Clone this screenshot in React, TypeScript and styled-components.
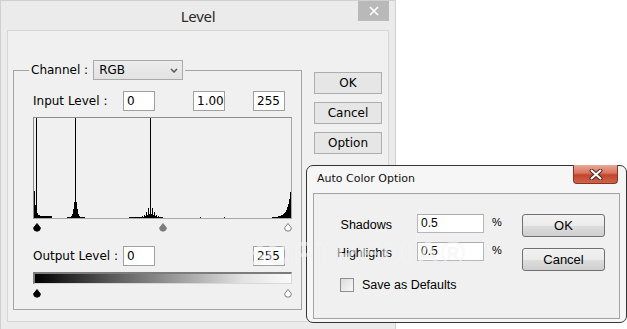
import React from 'react';
import styled, { createGlobalStyle } from 'styled-components';

const GlobalStyle = createGlobalStyle`
  html, body {
    margin: 0;
    padding: 0;
    background: #ffffff;
    overflow: hidden;
  }
  #root {
    position: relative;
    width: 627px;
    height: 329px;
    overflow: hidden;
  }
`;

// ---- histogram data (computed once) ----
const HIST_W = 257;
const HIST_H = 100;
const SPIKES = [2, 41, 116];

const histogram = Array.from({ length: HIST_W }, (_, x) => {
    let h = 0;
    h += 27 * Math.exp(-x / 1.3);
    h += 18 * Math.exp(-(((x - 41) / 2.3) ** 2));
    if (x > 100 && x < 128) h += (x % 2 === 0 ? 10 : 3) * Math.exp(-(((x - 116) / 5) ** 2));
    h += 25 * Math.exp(-(HIST_W - 1 - x) / 3.2);
    if (x >= 3 && x <= 17) h += 2;
    if ((x >= 33 && x <= 50) || (x >= 95 && x <= 128) || x >= 238) h += 1;
    if (x === 166 || x === 190) h += 1;
    return Math.round(h);
});

const histPath = histogram
    .map((h, x) => (h > 0 ? `M${x + 0.5} ${HIST_H}V${HIST_H - Math.min(h, HIST_H)}` : ''))
    .join('');

// ---- Level window ----
const LevelWindow = styled.div`
    width: 396px;
    height: 345px;
    box-sizing: border-box;
    border: 1px solid #d0d0d0;
    background: #ebebeb;
    padding: 0 6px;
    display: flex;
    flex-direction: column;
    font-family: "DejaVu Sans", "Liberation Sans", sans-serif;
    font-size: 12px;
    color: #000;
`;

const TitleBar = styled.div`
    height: 29px;
    display: grid;
    grid-template-columns: 1fr auto 1fr;
    align-items: start;
`;

const Title = styled.div`
    grid-column: 2;
    font-family: "Noto Sans", "Open Sans", sans-serif;
    font-size: 15px;
    letter-spacing: -0.3px;
    line-height: 30px;
    color: #2b2b2b;
`;

const GrayClose = styled.div`
    grid-column: 3;
    justify-self: end;
    width: 31px;
    height: 20px;
    background: #b9b9b9;
    display: flex;
    align-items: center;
    justify-content: center;
`;

const Panel = styled.div`
    border: 1px solid #d7d7d7;
    background: #f0f0f0;
    display: flex;
    align-items: flex-start;
    padding: 29px 5px 11px 5px;
`;

const Group = styled.fieldset`
    width: 289px;
    box-sizing: border-box;
    margin: 0;
    padding: 0;
    min-width: 0;
    border: 1px solid #a3a3a3;
`;

const Legend = styled.legend`
    margin-left: 15px;
    padding: 0 2px;
    display: flex;
    align-items: center;
    gap: 5px;
`;

const SelectBox = styled.div`
    width: 90px;
    height: 20px;
    box-sizing: border-box;
    border: 1px solid #a9a9a9;
    background: linear-gradient(#ececec, #e2e2e2);
    display: flex;
    align-items: center;
    justify-content: space-between;
    padding: 0 4px 0 5px;
`;

const GroupBody = styled.div`
    display: flex;
    flex-direction: column;
    padding: 11px 9px 11px 19px;
`;

const Row = styled.div<{ $top?: number }>`
    display: flex;
    align-items: center;
    height: 20px;
    padding-right: 7px;
    margin-top: ${p => p.$top ?? 0}px;
`;

const RowLabel = styled.span`
    width: 90px;
    flex: none;
`;

const NumField = styled.div<{ $gap?: number; $push?: boolean }>`
    width: 32px;
    height: 20px;
    box-sizing: border-box;
    border: 1px solid #a0a0a0;
    background: #fff;
    padding: 1px 3px 0;
    line-height: 17px;
    margin-left: ${p => (p.$push ? 'auto' : `${p.$gap ?? 0}px`)};
`;

const HistBox = styled.div`
    margin-top: 6px;
    width: 259px;
    height: 102px;
    box-sizing: border-box;
    border: 1px solid #a8a8a8;
    border-top-color: #8c8c8c;
    border-left-color: #8c8c8c;
    background: #f0f0f0;
    display: flex;
`;

const MarkerRow = styled.div<{ $top: number }>`
    margin-top: ${p => p.$top}px;
    width: 259px;
    height: 9px;
    display: flex;
    justify-content: space-between;
`;

const Gradient = styled.div`
    margin-top: 6px;
    width: 259px;
    height: 12px;
    box-sizing: border-box;
    border-top: 2px solid #7c7c7c;
    border-left: 2px solid #7c7c7c;
    border-right: 1px solid #d8d8d8;
    border-bottom: 1px solid #d8d8d8;
    background: linear-gradient(to right, #000 0%, #5a5a5a 30%, #a8a8a8 60%, #e4e4e4 82%, #fafafa 100%);
`;

const ButtonColumn = styled.div`
    margin-left: 12px;
    padding-top: 12px;
    display: flex;
    flex-direction: column;
    gap: 8px;
`;

const FlatButton = styled.div`
    width: 68px;
    height: 22px;
    box-sizing: border-box;
    border: 1px solid #adadad;
    background: #e6e6e6;
    display: flex;
    align-items: center;
    justify-content: center;
`;

// ---- Auto Color Option dialog ----
const AutoDialog = styled.div`
    position: absolute;
    left: 306px;
    top: 165px;
    width: 321px;
    height: 158px;
    box-sizing: border-box;
    border: 1px solid #353535;
    border-radius: 7px;
    background: #f6f6f6;
    padding: 0 6px 3px 6px;
    display: flex;
    flex-direction: column;
    font-family: "Liberation Sans", Arial, sans-serif;
    font-size: 12.5px;
    color: #000;
`;

const DialogTitleBar = styled.div`
    height: 27px;
    display: flex;
    justify-content: space-between;
    align-items: flex-start;
`;

const DialogTitle = styled.div`
    padding: 6px 0 0 4px;
    font-family: "DejaVu Sans", sans-serif;
    font-size: 11px;
    color: #111;
`;

const RedClose = styled.div`
    margin: -1px 2px 0 0;
    width: 45px;
    height: 19px;
    box-sizing: border-box;
    border: 1px solid #8a3424;
    border-top: none;
    border-radius: 0 0 4px 4px;
    background: linear-gradient(#e9a797 0%, #d9745f 45%, #c2452c 55%, #d0644c 100%);
    display: flex;
    align-items: center;
    justify-content: center;
`;

const DialogPanel = styled.div`
    flex: 1;
    border: 1px solid #a3a3a3;
    background: #f0f0f0;
    display: flex;
    align-items: flex-start;
`;

const FormColumn = styled.div`
    padding-top: 20px;
    display: flex;
    flex-direction: column;
`;

const FieldRow = styled.div<{ $top?: number }>`
    display: flex;
    align-items: center;
    height: 19px;
    margin-top: ${p => p.$top ?? 0}px;
`;

const FieldLabel = styled.span`
    width: 78px;
    text-align: right;
    padding-top: 3px;
`;

const TextField = styled.div`
    margin-left: 25px;
    width: 67px;
    height: 19px;
    box-sizing: border-box;
    border: 1px solid #b4b7bd;
    border-top-color: #abadb3;
    background: #fff;
    padding: 1px 3px;
    font-size: 12px;
    line-height: 15px;
`;

const Percent = styled.span`
    margin-left: 8px;
    font-size: 11px;
    padding-bottom: 3px;
`;

const CheckRow = styled.label`
    margin: 17px 0 0 26px;
    display: flex;
    align-items: center;
    gap: 8px;
`;

const CheckBox = styled.span`
    width: 14px;
    height: 14px;
    box-sizing: border-box;
    border: 1px solid #8e8f8f;
    background: linear-gradient(135deg, #dcdcdc, #f8f8f8);
`;

const DialogButtons = styled.div`
    margin: 20px 14px 0 auto;
    display: flex;
    flex-direction: column;
    gap: 11px;
`;

const RoundButton = styled.div`
    width: 83px;
    height: 23px;
    box-sizing: border-box;
    border: 1px solid #707070;
    border-radius: 3px;
    background: linear-gradient(#f2f2f2 0%, #ebebeb 50%, #dddddd 51%, #cfcfcf 100%);
    display: flex;
    align-items: center;
    justify-content: center;
    font-size: 13px;
`;

// faint screenshot watermark lying over both windows
const Watermark = styled.div`
    position: absolute;
    left: 243px;
    top: 235px;
    font-family: "Liberation Sans", Arial, sans-serif;
    font-weight: bold;
    font-size: 33px;
    letter-spacing: 1px;
    color: rgba(255, 255, 255, 0.55);
    text-shadow: 0 0 1px rgba(0, 0, 0, 0.06);
    pointer-events: none;
`;

type Tone = 'black' | 'gray' | 'white';

function Marker({ tone }: { tone: Tone }) {
    const fill = tone === 'black' ? '#000' : tone === 'gray' ? '#7d7d7d' : '#fff';
    const stroke = tone === 'white' ? '#6e6e6e' : fill;
    return (
        <svg width="8" height="9" viewBox="0 0 8 9">
            <path d="M4 0.5 L7.4 4.8 A3.4 3.4 0 0 1 0.6 4.8 Z" fill={fill} stroke={stroke} strokeWidth="0.9" />
        </svg>
    );
}

function Histogram() {
    return (
        <HistBox>
            <svg width={HIST_W} height={HIST_H} viewBox={`0 0 ${HIST_W} ${HIST_H}`} shapeRendering="crispEdges">
                <path d={histPath} stroke="#000" strokeWidth="1" />
                {SPIKES.map(x => (
                    <line key={x} x1={x + 0.5} x2={x + 0.5} y1={0} y2={HIST_H} stroke="#000" strokeWidth="1" />
                ))}
            </svg>
        </HistBox>
    );
}

export default function App() {
    return (
        <>
            <GlobalStyle />
            <LevelWindow>
                <TitleBar>
                    <Title>Level</Title>
                    <GrayClose>
                        <svg width="10" height="10" viewBox="0 0 10 10">
                            <path d="M1 1 L9 9 M9 1 L1 9" stroke="#fff" strokeWidth="1.6" />
                        </svg>
                    </GrayClose>
                </TitleBar>
                <Panel>
                    <Group>
                        <Legend>
                            <span>Channel :</span>
                            <SelectBox>
                                <span>RGB</span>
                                <svg width="8" height="5" viewBox="0 0 8 5">
                                    <path d="M1 1 L4 4 L7 1" fill="none" stroke="#555" strokeWidth="1.5" />
                                </svg>
                            </SelectBox>
                        </Legend>
                        <GroupBody>
                            <Row>
                                <RowLabel>Input Level :</RowLabel>
                                <NumField>0</NumField>
                                <NumField $gap={38}>1.00</NumField>
                                <NumField $gap={28}>255</NumField>
                            </Row>
                            <Histogram />
                            <MarkerRow $top={4}>
                                <Marker tone="black" />
                                <Marker tone="gray" />
                                <Marker tone="white" />
                            </MarkerRow>
                            <Row $top={14}>
                                <RowLabel>Output Level :</RowLabel>
                                <NumField>0</NumField>
                                <NumField $push>255</NumField>
                            </Row>
                            <Gradient />
                            <MarkerRow $top={5}>
                                <Marker tone="black" />
                                <Marker tone="white" />
                            </MarkerRow>
                        </GroupBody>
                    </Group>
                    <ButtonColumn>
                        <FlatButton>OK</FlatButton>
                        <FlatButton>Cancel</FlatButton>
                        <FlatButton>Option</FlatButton>
                    </ButtonColumn>
                </Panel>
            </LevelWindow>

            <AutoDialog>
                <DialogTitleBar>
                    <DialogTitle>Auto Color Option</DialogTitle>
                    <RedClose>
                        <svg width="14" height="11" viewBox="0 0 14 11">
                            <path d="M2.5 1.5 L11.5 9.5 M11.5 1.5 L2.5 9.5" stroke="#4a2a24" strokeWidth="4" strokeLinecap="round" />
                            <path d="M2.5 1.5 L11.5 9.5 M11.5 1.5 L2.5 9.5" stroke="#fff" strokeWidth="2" strokeLinecap="round" />
                        </svg>
                    </RedClose>
                </DialogTitleBar>
                <DialogPanel>
                    <FormColumn>
                        <FieldRow>
                            <FieldLabel>Shadows</FieldLabel>
                            <TextField>0.5</TextField>
                            <Percent>%</Percent>
                        </FieldRow>
                        <FieldRow $top={9}>
                            <FieldLabel>Highlights</FieldLabel>
                            <TextField>0.5</TextField>
                            <Percent>%</Percent>
                        </FieldRow>
                        <CheckRow>
                            <CheckBox />
                            <span>Save as Defaults</span>
                        </CheckRow>
                    </FormColumn>
                    <DialogButtons>
                        <RoundButton>OK</RoundButton>
                        <RoundButton>Cancel</RoundButton>
                    </DialogButtons>
                </DialogPanel>
            </AutoDialog>

            <Watermark>SOFTPEDIA®</Watermark>
        </>
    );
}
